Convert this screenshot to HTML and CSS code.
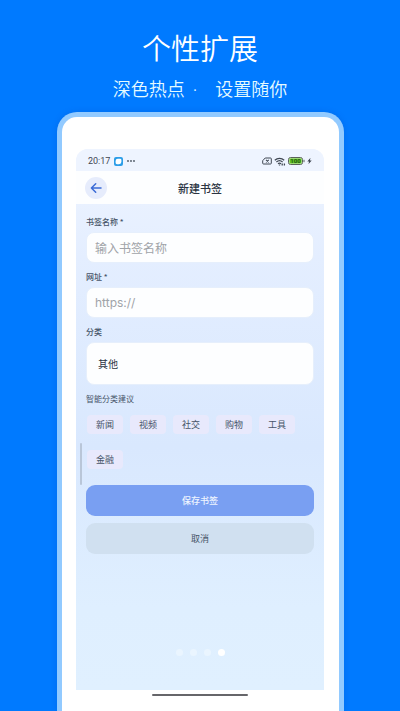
FILE: index.html
```html
<!DOCTYPE html>
<html lang="zh-CN">
<head>
	<meta charset="UTF-8">
	<meta name="viewport" content="width=device-width, initial-scale=1">
	<title>新建书签</title>
	<link rel="stylesheet" href="styles.css">
</head>
<body>

	<div class="intro">
		<h1>个性扩展</h1>
		<p><span>深色热点</span><span>·</span><span class="sub">设置随你</span></p>
	</div>

	<div class="phone">
		<div class="screen">
			<div class="status">
				<span>20:17</span>
				<svg class="app-icon" width="9" height="9" viewBox="0 0 9 9">
					<rect width="9" height="9" rx="2" fill="#2b9de8"/>
					<path d="M3.800 1.700h2.200a1.400 1.400 0 0 1 1.400 1.400v1.700a2.400 2.400 0 0 1-2.400 2.400h-2a1.400 1.400 0 0 1-1.400-1.400v-1.900a2.200 2.200 0 0 1 2.200-2.200z" fill="#fff"/>
				</svg>
				<svg width="8" height="4" viewBox="0 0 8 4" fill="#4b5563">
					<circle cx="1" cy="2" r="0.900"/>
					<circle cx="4" cy="2" r="0.900"/>
					<circle cx="7" cy="2" r="0.900"/>
				</svg>
				<div class="status-right">
					<svg width="10" height="8" viewBox="0 0 10 8" fill="none" stroke="#3f4753">
						<path d="M3.200 1h5.300a.8.8 0 0 1 .8.8v4.400a.8.8 0 0 1-.8.8h-7a.8.8 0 0 1-.8-.8v-2.500z"/>
						<path d="M4 2.800l2.800 2.600M6.800 2.800l-2.800 2.600" stroke-width="1.100"/>
					</svg>
					<svg width="12" height="9" viewBox="0 0 12 9" fill="none" stroke="#3f4753" stroke-width="1.200">
						<path d="M.8 3.200a7 7 0 0 1 9.400 0M2.400 5a4.700 4.700 0 0 1 6.200 0M4 6.700a2.500 2.500 0 0 1 3 0"/>
						<path d="M5.500 8.400v-.8M8.200 6.500v2M10.400 6.500v2" stroke-width="1.300"/>
					</svg>
					<svg width="17" height="8" viewBox="0 0 17 8">
						<rect x="0.500" y="0.500" width="14" height="7" rx="2" fill="#d9edc8" stroke="#59635a"/>
						<rect x="1.500" y="1.500" width="12" height="5" rx="1" fill="#62c522"/>
						<text x="7.500" y="6.200" text-anchor="middle" class="battery-text">100</text>
						<path d="M16 2.800v2.400" stroke="#59635a"/>
					</svg>
					<svg width="5" height="8" viewBox="0 0 5 8" fill="#3f4753">
						<path d="M3.500.8L.3 4.500h1.800L1.400 7.300l3.300-3.900H2.900z"/>
					</svg>
				</div>
			</div>

			<div class="header">
				<button class="back" aria-label="返回">
					<svg width="12" height="12" viewBox="0 0 12 12" fill="none" stroke="#3b6bd6" stroke-width="1.500" stroke-linecap="round" stroke-linejoin="round">
						<path d="M11 6H1.500M5.700 1.700L1.400 6l4.300 4.300"/>
					</svg>
				</button>
				<h2>新建书签</h2>
			</div>

			<form class="form">
				<label for="name">书签名称 *</label>
				<input type="text" id="name" placeholder="输入书签名称">

				<label for="url">网址 *</label>
				<input type="text" id="url" placeholder="https://">

				<label for="category">分类</label>
				<select id="category">
					<option>其他</option>
					<option>新闻</option>
					<option>视频</option>
					<option>社交</option>
					<option>购物</option>
					<option>工具</option>
					<option>金融</option>
				</select>

				<p class="tip">智能分类建议</p>
				<div class="tags">
					<button type="button">新闻</button>
					<button type="button">视频</button>
					<button type="button">社交</button>
					<button type="button">购物</button>
					<button type="button">工具</button>
					<button type="button">金融</button>
				</div>

				<button type="button" class="btn save">保存书签</button>
				<button type="button" class="btn cancel">取消</button>
				<div class="scrollbar"></div>
			</form>

			<div class="dots">
				<i></i><i></i><i></i><i class="active"></i>
			</div>
		</div>
		<div class="home-bar"></div>
	</div>

</body>
</html>
```

FILE: styles.css
```css
*{
	margin: 0;
	padding: 0;
	box-sizing: border-box;
}
body{
	display: flex;
	flex-direction: column;
	min-height: 100vh;
	background: #007aff;
	font-family: "Noto Sans CJK SC", sans-serif;
	color: #2b3442;
}
button,input,select{
	border: none;
	font-family: inherit;
	color: inherit;
}

/* 顶部标题 */
.intro{
	padding-top: 27px;
	text-align: center;
	color: #fff;
}
.intro h1{
	font-size: 29px;
	font-weight: 350;
	line-height: 40px;
}
.intro p{
	display: flex;
	justify-content: center;
	gap: 8px;
	margin-top: 9px;
	font-family: "Noto Sans", "Noto Sans CJK SC", sans-serif;
	font-size: 18px;
	font-weight: 350;
	line-height: 26px;
	color: #e6fbff;
}
.intro .sub{
	margin-left: 10px;
}

/* 手机外框 */
.phone{
	flex: 1;
	margin: 10px 56px 0 57px;
	padding: 32px 15px 16px 14px;
	border: 5px solid #92caff;
	border-bottom: none;
	border-radius: 20px 20px 0 0;
	background: #fff;
	box-shadow: 0 0 6px rgba(0, 60, 160, 0.2);
}
.screen{
	border-radius: 12px 12px 0 0;
	background: linear-gradient(#eef4ff, #e4eeff 20%, #d9e8fe 55%, #dfefff 85%, #e0f0ff);
	overflow: hidden;
}
.status{
	display: flex;
	align-items: center;
	height: 22px;
	padding: 2px 12px 0;
	font-family: Roboto, sans-serif;
	font-size: 9px;
	color: #3f4753;
	background: #eef4ff;
}
.app-icon{
	margin: 0 4px;
}
.status-right{
	display: flex;
	align-items: center;
	gap: 2px;
	margin-left: auto;
}
.battery-text{
	font: bold 6px Roboto, sans-serif;
	fill: #24581a;
}
.header{
	display: grid;
	grid-template-columns: 22px 1fr 22px;
	align-items: center;
	height: 33px;
	padding: 0 9px;
	background: #fdfeff;
}
.header h2{
	font-size: 11px;
	font-weight: 500;
	line-height: 16px;
	text-align: center;
}
.back{
	display: flex;
	align-items: center;
	justify-content: center;
	width: 22px;
	height: 22px;
	border-radius: 50%;
	background: #e6ecfc;
}

/* 表单 */
.form{
	position: relative;
	display: flex;
	flex-direction: column;
	padding: 12px 10px 0;
}
.form label,.tip{
	margin-bottom: 4px;
	font-size: 8px;
	line-height: 12px;
	color: #465468;
}
.form label{
	font-weight: 500;
}
.form input,.form select{
	width: 100%;
	height: 31px;
	margin-bottom: 8px;
	padding: 0 8px;
	border: 1px solid #e6effc;
	border-radius: 8px;
	background: #fdfeff;
	font-size: 12px;
}
.form input::placeholder{
	color: #a0a3a8;
}
#url{
	font-family: Inter, sans-serif;
}
.form select{
	height: 43px;
	padding: 0 11px;
	font-size: 10px;
	appearance: none;
}
.tags{
	display: flex;
	flex-wrap: wrap;
	gap: 16px 7px;
	padding: 6px 0 0 1px;
}
.tags button{
	width: 36px;
	height: 19px;
	border-radius: 4px;
	background: #e8e9fc;
	font-size: 9px;
	color: #465468;
}
.btn{
	height: 31px;
	border-radius: 9px;
	font-size: 9px;
}
.save{
	margin-top: 16px;
	background: #799ff2;
	font-weight: 500;
	color: #eef4ff;
}
.cancel{
	margin-top: 7px;
	background: #d0e0f0;
	color: #465468;
}
.scrollbar{
	position: absolute;
	left: 4px;
	top: 239px;
	width: 2px;
	height: 42px;
	border-radius: 1px;
	background: #b9c6d8;
}

.dots{
	display: flex;
	justify-content: center;
	gap: 7px;
	padding: 95px 0 34px;
}
.dots i{
	width: 7px;
	height: 7px;
	border-radius: 50%;
	background: #eaf5ff;
}
.dots .active{
	background: #fff;
}
.home-bar{
	width: 39%;
	height: 2px;
	margin: 4px auto 0;
	border-radius: 1px;
	background: #66666a;
}
```
